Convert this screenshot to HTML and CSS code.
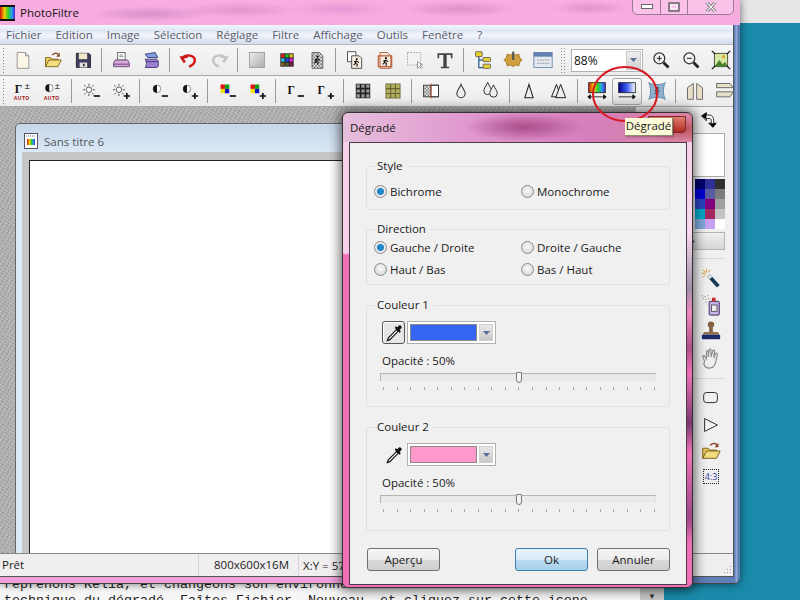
FILE: index.html
```html
<!DOCTYPE html>
<html lang="fr">
<head>
<meta charset="utf-8">
<title>PhotoFiltre - Dégradé</title>
<link rel="stylesheet" href="styles.css">
</head>
<body>
<svg class="defs" width="0" height="0" aria-hidden="true">
  <defs>
    <linearGradient id="rainbow" x1="0" x2="1" y1="0" y2="0"><stop offset="0" stop-color="#d01010"/><stop offset=".3" stop-color="#f0d000"/><stop offset=".55" stop-color="#30d030"/><stop offset=".8" stop-color="#20a0f0"/><stop offset="1" stop-color="#5020d0"/></linearGradient>
    <linearGradient id="bluegrad" x1="0" x2="1" y1="0" y2="0"><stop offset="0" stop-color="#000090"/><stop offset=".5" stop-color="#4060f0"/><stop offset="1" stop-color="#fff"/></linearGradient>
    <linearGradient id="graysq" x1="0" x2="1" y1="0" y2="1"><stop offset="0" stop-color="#eee"/><stop offset="1" stop-color="#aaa"/></linearGradient>
    <pattern id="check" width="4" height="4" patternUnits="userSpaceOnUse"><rect width="4" height="4" fill="#eee"/><rect width="2" height="2" fill="#777"/><rect x="2" y="2" width="2" height="2" fill="#777"/></pattern>
    <symbol id="runner" viewBox="0 0 24 24"><circle cx="13" cy="6" r="2" fill="#111"/><path d="M13 9l-3 5 4 2-1 5M12 10l-4 2M13 10l4 3M10 15l-3 3" fill="none" stroke="#111" stroke-width="2"/></symbol>
    <symbol id="folder" viewBox="0 0 24 24"><path d="M3 20V9h6l2 2h7v2" fill="#e8c860" stroke="#7a5a10"/><path d="M3 20l4-8h15l-4 8z" fill="#f2dc80" stroke="#7a5a10"/><path d="M11 6c3-3 6-3 8 0" fill="none" stroke="#8a4020" stroke-width="1.3"/><path d="M20 3v5h-4z" fill="#8a4020"/></symbol>
    <symbol id="drop" viewBox="0 0 24 24"><path d="M12 4c-2 5-5 8-5 11a5 5 0 0 0 10 0c0-3-3-6-5-11z" fill="#eee" stroke="#333" stroke-width="1.3"/></symbol>
    <symbol id="dropper" viewBox="0 0 24 24"><path d="M15 8L5 18l-1 3 3-1L17 10z" fill="#fff" stroke="#111" stroke-width="1.4"/><path d="M13 6l6 6 1-2-1-2 2-2c1-2-2-4-3-3l-2 2-2-1z" fill="#111"/></symbol>
    <symbol id="sun" viewBox="0 0 16 16"><circle cx="8" cy="8" r="3.5" fill="#fff" stroke="#333"/><path d="M8 0v3M8 13v3M0 8h3M13 8h3M2 2l2 2M12 12l2 2M2 14l2-2M12 4l2-2" stroke="#333"/></symbol>
    <symbol id="half" viewBox="0 0 12 12"><circle cx="6" cy="6" r="5" fill="#fff" stroke="#222" stroke-width=".6"/><path d="M6 1a5 5 0 0 0 0 10z" fill="#111"/></symbol>
    <symbol id="rgb" viewBox="0 0 12 12"><rect width="6" height="6" fill="#e01010"/><rect x="6" width="6" height="6" fill="#10a010"/><rect y="6" width="6" height="6" fill="#f0e010"/><rect x="6" y="6" width="6" height="6" fill="#1010c0"/></symbol>
    <symbol id="minus" viewBox="0 0 8 8"><rect y="3" width="8" height="2" fill="#111"/></symbol>
    <symbol id="plus" viewBox="0 0 8 8"><path d="M3 0h2v3h3v2H5v3H3V5H0V3h3z" fill="#111"/></symbol>
    <symbol id="gridicon" viewBox="0 0 14 14"><rect width="14" height="14" fill="#222"/><path d="M1 1h3v3H1zM5.500 1h3v3h-3zM10 1h3v3h-3zM1 5.500h3v3H1zM5.500 5.500h3v3h-3zM10 5.500h3v3h-3zM1 10h3v3H1zM5.500 10h3v3h-3zM10 10h3v3h-3z" fill="#999"/></symbol>
    <symbol id="lens" viewBox="0 0 24 24"><path d="M15 15l6 6" stroke="#222" stroke-width="3.4"/><circle cx="10" cy="10" r="6.500" fill="#f4f4f4" stroke="#333" stroke-width="1.500"/></symbol>
  </defs>
</svg>

<div class="desktop">
  <div class="corner-gray"></div>
  <div class="page-behind">
    <p class="page-line">reprenons Kelia, et changeons son environnement</p>
    <p class="page-line">technique du dégradé. Faîtes Fichier, Nouveau, et cliquez sur cette icone</p>
    <span class="page-arrow">▼</span>
  </div>

  <section class="app">
    <header class="app-title">
      <svg class="app-icon" width="15" height="16" viewBox="0 0 15 16"><rect width="15" height="16" fill="#111"/><rect x="0" y="2" width="15" height="12" fill="url(#rainbow)"/></svg>
      <span class="app-name">PhotoFiltre</span>
      <div class="win-ctrls">
        <span class="win-btn win-min"><svg width="12" height="6" viewBox="0 0 12 6"><rect x=".5" y=".5" width="11" height="4" fill="#fff" stroke="#666"/></svg></span>
        <span class="win-btn win-max"><svg width="12" height="10" viewBox="0 0 12 10"><rect x="1" y="1" width="10" height="8" fill="none" stroke="#666" stroke-width="1.500"/><rect x="3" y="3" width="6" height="4" fill="#f4c8e8" stroke="#fff"/></svg></span>
        <span class="win-btn win-close"><svg width="12" height="10" viewBox="0 0 12 10"><path d="M1.500 0l9 10M10.500 0l-9 10" stroke="#666" stroke-width="2.800"/><path d="M1.500 0l9 10M10.500 0l-9 10" stroke="#fff" stroke-width="1.200"/></svg></span>
      </div>
    </header>

    <div class="client">
      <nav class="menu">
        <span>Fichier</span><span>Edition</span><span>Image</span><span>Sélection</span><span>Réglage</span><span>Filtre</span><span>Affichage</span><span>Outils</span><span>Fenêtre</span><span>?</span>
      </nav>

      <div class="toolbar">
        <i class="grip"></i>
        <b class="tool"><svg viewBox="0 0 24 24"><path d="M5 3h10l4 4v15H5z" fill="#fbf6e6" stroke="#888"/><path d="M15 3v4h4" fill="#ddd" stroke="#888"/></svg></b>
        <b class="tool"><svg viewBox="0 0 24 24"><use href="#folder"/></svg></b>
        <b class="tool"><svg viewBox="0 0 24 24"><path d="M4 4h15l2 2v15H4z" fill="#3c3c5e" stroke="#222"/><rect x="7" y="4" width="10" height="7" fill="#f0e8c8"/><rect x="8" y="15" width="9" height="6" fill="#ddd"/><rect x="12" y="16.500" width="2" height="3" fill="#333"/></svg></b>
        <i class="sep"></i>
        <b class="tool"><svg viewBox="0 0 24 24"><rect x="8" y="3" width="9" height="9" fill="#fff" stroke="#555"/><path d="M10 6h4M10 8h5" stroke="#777"/><path d="M5 12h15l2 4v4H3v-4z" fill="#d8a8d8" stroke="#5a3a6a"/><path d="M3 17h19" stroke="#5a3a6a"/></svg></b>
        <b class="tool"><svg viewBox="0 0 24 24"><path d="M5 5l12-2 3 6H8z" fill="#80a0e0" stroke="#303070"/><path d="M5 11h14c2 2 2 5 2 6s0 4-3 4H5c2-2 2-7 0-10z" fill="#a080d0" stroke="#303070"/><path d="M6 14h15" stroke="#303070"/></svg></b>
        <i class="sep"></i>
        <b class="tool"><svg viewBox="0 0 24 24"><path d="M7 15l-4-6 7-1M4 9c6-4 14-3 15 3 0 4-4 7-7 8" fill="none" stroke="#d01818" stroke-width="3"/></svg></b>
        <b class="tool"><svg viewBox="0 0 24 24"><path d="M17 15l4-6-7-1M20 9C14 5 6 6 5 12c0 4 4 7 7 8" fill="none" stroke="#c4c4c4" stroke-width="3"/></svg></b>
        <i class="sep"></i>
        <b class="tool"><svg viewBox="0 0 24 24"><rect x="3" y="3" width="18" height="18" fill="url(#graysq)" stroke="#999"/></svg></b>
        <b class="tool"><svg viewBox="0 0 24 24"><rect x="4" y="4" width="16" height="16" fill="#222"/><path d="M5 5h4v4H5z" fill="#e02020"/><path d="M10 5h4v4h-4z" fill="#20c020"/><path d="M15 5h4v4h-4z" fill="#e0c020"/><path d="M5 10h4v4H5z" fill="#20c0e0"/><path d="M10 10h4v4h-4z" fill="#2040e0"/><path d="M15 10h4v4h-4z" fill="#e020e0"/><path d="M5 15h4v4H5z" fill="#806020"/><path d="M10 15h4v4h-4z" fill="#506030"/><path d="M15 15h4v4h-4z" fill="#802040"/></svg></b>
        <b class="tool"><svg viewBox="0 0 24 24"><path d="M6 3h9l4 4v15H6z" fill="url(#check)" stroke="#555"/><use href="#runner" x="2" y="4" width="20" height="16"/></svg></b>
        <i class="sep"></i>
        <b class="tool"><svg viewBox="0 0 24 24"><path d="M3 2h10v12H3z" fill="#fff" stroke="#333"/><path d="M8 7h9l3 3v12H8z" fill="#f8f0e0" stroke="#333"/><use href="#runner" x="6" y="7" width="15" height="15"/></svg></b>
        <b class="tool"><svg viewBox="0 0 24 24"><path d="M6 3h9l4 4v15H6z" fill="#f8e8d8" stroke="#a05030"/><rect x="4" y="7" width="16" height="13" fill="none" stroke="#c06040" stroke-width="1.500"/><use href="#runner" x="5" y="6" width="15" height="15"/></svg></b>
        <b class="tool"><svg viewBox="0 0 24 24"><rect x="3" y="3" width="16" height="15" fill="#f2f2f2" stroke="#999" stroke-dasharray="2 1.500"/><path d="M15 14v8l2-2 3 2 1-1-3-3h3z" fill="#fff" stroke="#888"/></svg></b>
        <b class="tool"><svg viewBox="0 0 24 24"><path d="M3 4h18v6h-2V6h-5v14h3v2H7v-2h3V6H5v4H3z" fill="#444"/></svg></b>
        <i class="sep"></i>
        <b class="tool"><svg viewBox="0 0 24 24"><path d="M7 6v15h5M7 12h5" fill="none" stroke="#2a5a90" stroke-width="1.500"/><rect x="3" y="2" width="8" height="6" rx="1" fill="#e8d030" stroke="#555"/><rect x="12" y="9" width="9" height="5" rx="1" fill="#e8d030" stroke="#555"/><rect x="12" y="17" width="9" height="5" rx="1" fill="#e8d030" stroke="#555"/></svg></b>
        <b class="tool"><svg viewBox="0 0 24 24"><path d="M12 4l3 2 4-1 1 4 3 3-3 3-1 4-4-1-3 2-3-2-4 1-1-4-3-3 3-3 1-4 4 1z" fill="#d0a040" stroke="#a07020"/><rect x="11" y="2" width="2.500" height="10" fill="#555"/></svg></b>
        <b class="tool"><svg viewBox="0 0 24 24"><rect x="1" y="3" width="22" height="18" fill="#e4e8f0" stroke="#6080b0"/><rect x="1" y="3" width="22" height="5" fill="#6080b0"/><path d="M5 12h14M5 16h14" stroke="#888" stroke-dasharray="2 1"/></svg></b>
        <i class="grip grip-end"></i>
        <div class="zoom-combo"><span class="zoom-val">88%</span><span class="zoom-arrow"><svg width="7" height="4" viewBox="0 0 7 4"><path d="M0 0h7L3.500 4z" fill="#5a6a9a"/></svg></span></div>
        <b class="tool"><svg viewBox="0 0 24 24"><use href="#lens"/><path d="M7 10h6M10 7v6" stroke="#222" stroke-width="1.200"/></svg></b>
        <b class="tool"><svg viewBox="0 0 24 24"><use href="#lens"/><path d="M7 10h6" stroke="#222" stroke-width="1.200"/></svg></b>
        <b class="tool"><svg viewBox="0 0 24 24"><rect x="4" y="4" width="16" height="16" fill="#d8e8a0" stroke="#333"/><path d="M4 20l6-8 4 5 3-3 3 6z" fill="#4a8030"/><circle cx="15" cy="8" r="2" fill="#e0a030"/><path d="M1 1l4 4M23 1l-4 4M1 23l4-4M23 23l-4-4" stroke="#111" stroke-width="1.500"/></svg></b>
      </div>

      <div class="toolbar toolbar-2">
        <i class="grip"></i>
        <b class="tool"><svg viewBox="0 0 24 24"><text x="2" y="14" class="gamma">Γ</text><text x="14" y="10" class="pm">±</text><text x="1" y="23" class="auto">AUTO</text></svg></b>
        <b class="tool"><svg viewBox="0 0 24 24"><use href="#half" x="2" y="3" width="11" height="11"/><text x="14" y="10" class="pm">±</text><text x="1" y="23" class="auto">AUTO</text></svg></b>
        <i class="sep"></i>
        <b class="tool"><svg viewBox="0 0 24 24"><use href="#sun" x="2" y="3" width="15" height="15"/><use href="#minus" x="15" y="14" width="8" height="8"/></svg></b>
        <b class="tool"><svg viewBox="0 0 24 24"><use href="#sun" x="2" y="3" width="15" height="15"/><use href="#plus" x="15" y="14" width="8" height="8"/></svg></b>
        <i class="sep"></i>
        <b class="tool"><svg viewBox="0 0 24 24"><use href="#half" x="4" y="4" width="11" height="11"/><use href="#minus" x="15" y="14" width="8" height="8"/></svg></b>
        <b class="tool"><svg viewBox="0 0 24 24"><use href="#half" x="4" y="4" width="11" height="11"/><use href="#plus" x="15" y="14" width="8" height="8"/></svg></b>
        <i class="sep"></i>
        <b class="tool"><svg viewBox="0 0 24 24"><use href="#rgb" x="4" y="4" width="11" height="11"/><use href="#minus" x="15" y="14" width="8" height="8"/></svg></b>
        <b class="tool"><svg viewBox="0 0 24 24"><use href="#rgb" x="4" y="4" width="11" height="11"/><use href="#plus" x="15" y="14" width="8" height="8"/></svg></b>
        <i class="sep"></i>
        <b class="tool"><svg viewBox="0 0 24 24"><text x="3" y="16" class="gamma">Γ</text><use href="#minus" x="15" y="14" width="8" height="8"/></svg></b>
        <b class="tool"><svg viewBox="0 0 24 24"><text x="3" y="16" class="gamma">Γ</text><use href="#plus" x="15" y="14" width="8" height="8"/></svg></b>
        <i class="sep"></i>
        <b class="tool"><svg viewBox="0 0 24 24"><use href="#gridicon" x="3" y="3" width="18" height="18"/></svg></b>
        <b class="tool"><svg viewBox="0 0 24 24"><rect x="3" y="3" width="18" height="18" fill="#665f30"/><path d="M4 4h4.500v4.500H4zM9.800 4h4.500v4.500H9.800zM15.500 4H20v4.500h-4.500zM4 9.800h4.500v4.500H4zM9.800 9.800h4.500v4.500H9.800zM15.500 9.800H20v4.500h-4.500zM4 15.500h4.500V20H4zM9.800 15.500h4.500V20H9.800zM15.500 15.500H20V20h-4.500z" fill="#b0b060"/></svg></b>
        <i class="sep"></i>
        <b class="tool"><svg viewBox="0 0 24 24"><rect x="3" y="5" width="9" height="14" fill="url(#check)"/><rect x="12" y="5" width="9" height="14" fill="#fff" stroke="#333"/><rect x="3" y="5" width="18" height="14" fill="none" stroke="#333"/><path d="M12 3v18" stroke="#c04020"/></svg></b>
        <b class="tool"><svg viewBox="0 0 24 24"><use href="#drop"/></svg></b>
        <b class="tool"><svg viewBox="0 0 24 24"><use href="#drop" x="-3" y="-2" width="22" height="22"/><use href="#drop" x="4" y="1" width="22" height="22"/></svg></b>
        <i class="sep"></i>
        <b class="tool"><svg viewBox="0 0 24 24"><path d="M12 4l5 16H7z" fill="#eee" stroke="#222" stroke-width="1.300"/></svg></b>
        <b class="tool"><svg viewBox="0 0 24 24"><path d="M9 4l5 15H3z" fill="#eee" stroke="#222" stroke-width="1.200"/><path d="M14 4l6 16H8z" fill="#eee" stroke="#222" stroke-width="1.200"/></svg></b>
        <i class="sep"></i>
        <b class="tool"><svg viewBox="0 0 24 24"><rect x="2" y="2" width="20" height="12" fill="url(#rainbow)" stroke="#222"/><path d="M1 19h22M1 19l3-2.500v5zM23 19l-3-2.500v5z" stroke="#111" fill="#111"/></svg></b>
        <b class="tool tool-on"><svg viewBox="0 0 24 24"><rect x="2" y="2" width="20" height="12" fill="url(#bluegrad)" stroke="#222"/><path d="M2 19h19M22 19l-3-2.500v5z" stroke="#111" fill="#111"/></svg></b>
        <b class="tool"><svg viewBox="0 0 24 24"><path d="M2 2c5 3 15 3 20 0-3 5-3 15 0 20-5-3-15-3-20 0 3-5 3-15 0-20z" fill="#8fb0cc" stroke="#5080a0"/><use href="#runner" x="5" y="5" width="14" height="14"/></svg></b>
        <i class="sep"></i>
        <b class="tool"><svg viewBox="0 0 24 24"><path d="M3 8l7-5v19H3zM21 8l-7-5v19h7z" fill="#e8dfc8" stroke="#555"/></svg></b>
        <b class="tool"><svg viewBox="0 0 24 24"><path d="M6 3h12l4 5H2V3zM2 13h20l-4 6H2z" fill="#e8dfc8" stroke="#555"/></svg></b>
      </div>

      <div class="main">
        <div class="workspace">
          <article class="doc">
            <header class="doc-title">
              <svg width="14" height="16" viewBox="0 0 14 16"><rect x=".5" y=".5" width="13" height="15" fill="#fff" stroke="#556"/><path d="M2 3h10" stroke="#778" stroke-dasharray="1 1"/><rect x="3" y="6" width="8" height="6" fill="url(#rainbow)"/></svg>
              <span>Sans titre 6</span>
            </header>
            <div class="doc-body"><div class="canvas"></div></div>
          </article>
        </div>

        <aside class="tools-side">
          <svg class="swap" width="18" height="18" viewBox="0 0 22 22"><path d="M3 6l6-4v3h4c3 0 5 3 5 7v3h3l-4 5-5-5h3v-3c0-2-1-3-2-3H9v3z" fill="#fff" stroke="#000"/><path d="M3 6l6-4v8zM12 15h9l-4 5z" fill="#000"/></svg>
          <div class="color-box"></div>
          <svg class="palette" width="30" height="50" viewBox="0 0 30 50">
            <rect width="10" height="10" fill="#00006a"/><rect x="10" width="10" height="10" fill="#2f2f98"/><rect x="20" width="10" height="10" fill="#303030"/>
            <rect y="10" width="10" height="10" fill="#0000d0"/><rect x="10" y="10" width="10" height="10" fill="#5a5aa0"/><rect x="20" y="10" width="10" height="10" fill="#7c7c7c"/>
            <rect y="20" width="10" height="10" fill="#2a45c0"/><rect x="10" y="20" width="10" height="10" fill="#800080"/><rect x="20" y="20" width="10" height="10" fill="#a0a0a0"/>
            <rect y="30" width="10" height="10" fill="#00a8c8"/><rect x="10" y="30" width="10" height="10" fill="#a02a60"/><rect x="20" y="30" width="10" height="10" fill="#c4c4c4"/>
            <rect y="40" width="10" height="10" fill="#7fa8d8"/><rect x="10" y="40" width="10" height="10" fill="#c8a0f0"/><rect x="20" y="40" width="10" height="10" fill="#fff"/>
          </svg>
          <div class="pal-next"><svg width="4" height="7" viewBox="0 0 4 7"><path d="M0 0l4 3.500L0 7z" fill="#5a6a9a"/></svg></div>
          <hr class="side-rule">
          <b class="side-tool"><svg viewBox="0 0 24 24"><path d="M9 9l11 12" stroke="#1a3a5a" stroke-width="4"/><path d="M9 9l3 3" stroke="#ddd" stroke-width="4"/><path d="M7 2v4M2 7h4M3 3l3 3M11 3l-2 3M3 11l3-2" stroke="#c89020"/></svg></b>
          <b class="side-tool"><svg viewBox="0 0 24 24"><rect x="10" y="8" width="11" height="15" rx="1" fill="#c8b0e8" stroke="#302050"/><rect x="12.500" y="12" width="6" height="7" fill="#eee" stroke="#555"/><rect x="13" y="4" width="4" height="4" fill="#c03030"/><path d="M2 2h1M5 3h1M8 2h1M3 5h1M6 6h1M9 5h1M6 9h1" stroke="#555"/></svg></b>
          <b class="side-tool"><svg viewBox="0 0 24 24"><circle cx="12" cy="5" r="3.500" fill="#806040"/><rect x="10" y="8" width="4" height="6" fill="#806040"/><path d="M5 13h14c1 0 2 2 2 3H3c0-1 1-3 2-3z" fill="#907050"/><rect x="2" y="16" width="20" height="5" rx="1" fill="#1a2a6a"/></svg></b>
          <b class="side-tool"><svg viewBox="0 0 24 24"><path d="M5 16l-2-6c0-1 2-1 2 0l2 3V5c0-1 2-1 2 0v6l1-8c0-1 2-1 2 0v8l2-7c0-1 2-1 2 0l-1 8 2-5c1-1 2 0 2 1l-2 9c-1 4-3 6-7 6-3 0-5-1-6-5z" fill="#eee" stroke="#888" stroke-width="1.200"/></svg></b>
          <hr class="side-rule side-rule-2">
          <b class="side-tool"><svg viewBox="0 0 24 24"><rect x="4" y="6" width="15" height="11" rx="3" fill="none" stroke="#222"/></svg></b>
          <b class="side-tool"><svg viewBox="0 0 24 24"><path d="M5 5l14 7-14 7z" fill="none" stroke="#222"/></svg></b>
          <b class="side-tool"><svg viewBox="0 0 24 24"><use href="#folder"/></svg></b>
          <b class="side-tool side-ratio">4:3</b>
        </aside>
      </div>

      <footer class="status">
        <span class="st-main">Prêt</span>
        <span class="st-size">800x600x16M</span>
        <span class="st-xy">X:Y = 57</span>
        <svg class="size-grip" width="10" height="10" viewBox="0 0 10 10"><path d="M8 1h1v1H8zM8 4h1v1H8zM5 4h1v1H5zM8 7h1v1H8zM5 7h1v1H5zM2 7h1v1H2z" fill="#999"/></svg>
      </footer>
    </div>
  </section>

  <section class="dialog">
    <header class="dlg-title">Dégradé</header>
    <span class="dlg-close"></span>
    <form class="dlg-body">
      <fieldset class="group group-style">
        <legend>Style</legend>
        <div class="radio-grid">
          <label class="radio"><input type="radio" name="style" checked>Bichrome</label>
          <label class="radio"><input type="radio" name="style">Monochrome</label>
        </div>
      </fieldset>
      <fieldset class="group group-dir">
        <legend>Direction</legend>
        <div class="radio-grid">
          <label class="radio"><input type="radio" name="dir" checked>Gauche / Droite</label>
          <label class="radio"><input type="radio" name="dir">Droite / Gauche</label>
          <label class="radio"><input type="radio" name="dir">Haut / Bas</label>
          <label class="radio"><input type="radio" name="dir">Bas / Haut</label>
        </div>
      </fieldset>
      <fieldset class="group group-color">
        <legend>Couleur 1</legend>
        <div class="color-row">
          <span class="pick pick-on"><svg width="20" height="20" viewBox="0 0 24 24"><use href="#dropper"/></svg></span>
          <span class="color-combo"><span class="swatch swatch-blue"></span><span class="combo-arrow"><svg width="7" height="4" viewBox="0 0 7 4"><path d="M0 0h7L3.500 4z" fill="#5a6a9a"/></svg></span></span>
        </div>
        <div class="opacity">Opacité : 50%</div>
        <div class="slider"><span class="thumb"></span></div>
        <div class="ticks"><i></i><i></i><i></i><i></i><i></i><i></i><i></i><i></i><i></i><i></i><i></i><i></i><i></i><i></i><i></i><i></i><i></i><i></i><i></i><i></i><i></i></div>
      </fieldset>
      <fieldset class="group group-color">
        <legend>Couleur 2</legend>
        <div class="color-row">
          <span class="pick"><svg width="20" height="20" viewBox="0 0 24 24"><use href="#dropper"/></svg></span>
          <span class="color-combo"><span class="swatch swatch-pink"></span><span class="combo-arrow"><svg width="7" height="4" viewBox="0 0 7 4"><path d="M0 0h7L3.500 4z" fill="#5a6a9a"/></svg></span></span>
        </div>
        <div class="opacity">Opacité : 50%</div>
        <div class="slider"><span class="thumb"></span></div>
        <div class="ticks"><i></i><i></i><i></i><i></i><i></i><i></i><i></i><i></i><i></i><i></i><i></i><i></i><i></i><i></i><i></i><i></i><i></i><i></i><i></i><i></i><i></i></div>
      </fieldset>
      <div class="dlg-actions">
        <button type="button" class="btn">Aperçu</button>
        <button type="button" class="btn btn-default">Ok</button>
        <button type="button" class="btn">Annuler</button>
      </div>
    </form>
  </section>

  <svg class="red-circle" width="70" height="60" viewBox="0 0 70 60"><ellipse cx="35" cy="30" rx="32" ry="27" fill="none" stroke="#d81a22" stroke-width="2"/></svg>
  <div class="tooltip">Dégradé</div>
</div>
</body>
</html>
```
FILE: styles.css
```css
* { box-sizing: border-box; }
html, body { margin: 0; padding: 0; }
body { font-family: "Open Sans", "Noto Sans", sans-serif; font-size: 11.5px; color: #1c1c1c; }
.defs { position: absolute; }

.desktop { position: relative; width: 800px; height: 600px; overflow: hidden; background: #1a8aaa; }
.corner-gray { position: absolute; left: 740px; top: 0; width: 60px; height: 23px; background: #e6e6e6; }

.page-behind { position: absolute; left: 0; top: 570px; width: 664px; height: 30px; background: #f6f6f6; overflow: hidden; }
.page-line { margin: 0; padding-left: 4px; font: 13.33px/16px "Liberation Mono", monospace; color: #222; white-space: nowrap; position: relative; top: 7px; }
.page-arrow { position: absolute; right: 0; top: 0; width: 24px; height: 30px; background: #c8c8c8; font-size: 8px; line-height: 52px; text-align: center; color: #333; }

/* main window */
.app {
  position: absolute; left: 0; top: 0; width: 740px; height: 584px;
  display: flex; flex-direction: column;
  border-radius: 0 0 6px 0;
  background: linear-gradient(90deg, #f2a0dc 0, #f2a0dc 600px, #5f7fb8 680px, #5f7fb8 735px, #90a8d4 736px, #90a8d4 737px, #5f7fb8 738px);
  box-shadow: 0 0 8px rgba(0,0,0,.55), inset 0 -1px 0 #444;
}
.app-title {
  height: 25px; flex: none; display: flex; align-items: center; position: relative;
  background:
    radial-gradient(ellipse 60px 8px at 150px 14px, rgba(190,120,190,.55), transparent),
    radial-gradient(ellipse 60px 8px at 240px 10px, rgba(200,120,180,.45), transparent),
    radial-gradient(ellipse 50px 8px at 340px 9px, rgba(210,120,200,.4), transparent),
    radial-gradient(ellipse 60px 8px at 460px 9px, rgba(190,110,170,.45), transparent),
    radial-gradient(ellipse 40px 7px at 590px 8px, rgba(190,110,170,.4), transparent),
    #f7addf;
}
.app-icon { margin: 1px 5px 0 0; }
.app-name { color: #151515; }
.win-ctrls { position: absolute; left: 632px; top: -1px; width: 102px; height: 16px; display: flex; border: 1px solid #9a7a98; border-radius: 0 0 5px 5px; background: rgba(255,225,245,.4); }
.win-btn { display: flex; align-items: center; justify-content: center; border-right: 1px solid #9a7a98; }
.win-btn svg { margin-bottom: 1px; }
.win-min { width: 28px; }
.win-max { width: 27px; }
.win-close { flex: 1; border-right: 0; }

.client { flex: 1; min-height: 0; margin: 0 7px 8px 0; display: flex; flex-direction: column; background: #efefef; box-shadow: 0 0 0 1px #555; }

.menu { height: 20px; flex: none; display: flex; align-items: center; padding-left: 6px; gap: 14px; color: #5c5c68; background: linear-gradient(#f4f6fb 0, #dde6f6 30%, #f2f5fb 52%, #d2dcee 100%); border-bottom: 1px solid #b8b8b8; }
.menu span { white-space: nowrap; }

.toolbar { height: 31px; flex: none; display: flex; align-items: center; background: linear-gradient(#f6f6f6, #ececec); border-bottom: 1px solid #a8a8a8; }
.grip { width: 8px; height: 26px; flex: none; background: radial-gradient(circle, #888 0.7px, transparent 1px) 2px 0 / 3px 3px; background-clip: content-box; padding: 0 2px; }
.grip-end { margin: 0 3px 0 0; width: 10px; padding: 0 3px; }
.sep { width: 8px; height: 24px; flex: none; background: linear-gradient(#999, #999) 3px 0 / 1px 100% no-repeat; }
.tool { width: 30px; height: 27px; flex: none; display: flex; align-items: center; justify-content: center; }
.tool svg { width: 20px; height: 20px; overflow: visible; }
.tool-on { border: 1px solid #a8a8a8; border-radius: 3px; background: linear-gradient(#fafafa 0, #efefef 50%, #dcdcdc 100%); }
.gamma { font: bold 14px "Liberation Serif", serif; fill: #111; }
.pm { font: 11px "Liberation Sans", sans-serif; fill: #333; }
.auto { font: bold 6px "Liberation Sans", sans-serif; fill: #a01010; letter-spacing: .5px; }

.zoom-combo { width: 72px; height: 23px; flex: none; display: flex; border: 1px solid #b4b4b4; background: #fff; margin-right: 3px; }
.zoom-val { flex: 1; padding: 2px 2px; font-size: 12px; color: #111; }
.zoom-arrow { width: 15px; margin: 1px; display: flex; align-items: center; justify-content: center; background: linear-gradient(#f0f0f0, #cfcfcf); border: 1px solid #c8c8c8; }

.main { flex: 1; min-height: 0; display: flex; }
.workspace {
  flex: none; width: 636px; padding: 16px 0 0 15px; overflow: hidden;
  background:
    repeating-linear-gradient(35deg, rgba(255,255,255,.18) 0 1px, transparent 1px 3px),
    repeating-linear-gradient(-60deg, rgba(0,0,0,.1) 0 1px, transparent 1px 4px),
    #aeaeae;
}
.doc { width: 700px; height: 460px; border: 1px solid #666; border-radius: 5px 5px 0 0; background: linear-gradient(#c6d7ea, #dce9f6 30px); padding: 0 0 0 6px; }
.doc-title { height: 28px; padding: 6px 0 0 2px; display: flex; align-items: center; gap: 6px; color: #55585c; }
.doc-body { background: #c6c6c6; padding: 8px 0 0 7px; height: 420px; }
.canvas { height: 400px; background: #fff; border: 1px solid #222; }

.tools-side { flex: none; width: 97px; padding: 0 8px 0 0; display: flex; flex-direction: column; align-items: flex-end; background: #f0f0f0; }
.swap { margin: 4px 8px 4px 0; }
.color-box { width: 60px; height: 44px; background: #fff; border: 1px solid #aaa; border-left: 0; margin-bottom: 3px; }
.palette { display: block; margin: -1px 0 3px 0; }
.pal-next { width: 45px; height: 18px; padding-left: 10px; display: flex; align-items: center; border: 1px solid #b4b4b4; background: linear-gradient(#f0f0f0, #d4d4d4); }
.side-rule { width: 45px; height: 1px; margin: 8px 0 6px; border: 0; background: #d8d8d8; }
.side-rule-2 { margin: 7px 0 6px; }
.side-tool { width: 30px; height: 26.500px; margin-right: -1px; display: flex; align-items: center; justify-content: center; }
.side-tool svg { width: 22px; height: 22px; }
.side-ratio { width: 16px; height: 15px; margin: 4px 6px 0 0; border: 1px dotted #222; color: #3040a0; font-size: 9px; font-weight: 400; line-height: 13px; text-align: center; }

.status { height: 23px; flex: none; display: flex; align-items: center; position: relative; background: #f0eeee; border-top: 1px solid #888; }
.st-main { width: 199px; padding-left: 2px; border-right: 1px solid #d4d4d4; line-height: 22px; }
.st-size { width: 100px; padding-left: 15px; border-right: 1px solid #d4d4d4; line-height: 22px; }
.st-xy { padding-left: 4px; }
.size-grip { position: absolute; right: 1px; bottom: 1px; }

/* dialog */
.dialog {
  position: absolute; left: 342px; top: 112px; width: 351px; height: 476px;
  padding: 29px 5px 2px 6px; border: 1px solid #333; border-radius: 6px;
  background:
    radial-gradient(ellipse 60px 14px at 52% 14px, rgba(165,70,130,.9), transparent) 0 0 / 100% 29px no-repeat,
    radial-gradient(ellipse 40px 12px at 97% 16px, rgba(180,60,60,.7), transparent) 0 0 / 100% 29px no-repeat,
    linear-gradient(90deg, #e6bedc 0, #e099cf 35%, #d67fbd 70%, #d8829f 100%) 0 0 / 100% 29px no-repeat,
    linear-gradient(#f6cfe8 0, #f8d8ec 120px, #a090a8 175px, #f088c0 200px, #b05088 235px, #f070b8 260px, #7a3a70 310px, #f070b8 340px, #a04888 405px, #f070b8 430px, #f070b8 100%) 100% 0 / 5px 100% no-repeat,
    linear-gradient(#f8d0ea 0, #f8d0ea 140px, #ef70b8 142px, #ef70b8 100%);
  box-shadow: 0 0 12px 2px rgba(0,0,0,.6);
}
.dlg-title { position: absolute; left: 7px; top: 7px; color: #1a1a1a; }
.dlg-close { position: absolute; right: 6px; top: 3px; width: 38px; height: 17px; border: 1px solid #7a2a2a; border-radius: 0 0 4px 4px; background: linear-gradient(#e08070, #b02a20); }

.dlg-body { height: 100%; padding: 15px 16px 0; background: #f0f0f0; border: 1px solid #4a3a4a; display: flex; flex-direction: column; }
.group { margin: 0 0 12px; padding: 9px 7px 10px; width: 304px; min-width: 0; border: 1px solid #dde1e6; border-radius: 3px; }
.group legend { margin-left: 0; padding: 0 5px 0 3px; height: 16px; line-height: 16px; color: #1a1a1a; }
.group-style { margin-bottom: 11px; }
.group-dir { padding: 2px 7px 7px; }
.group-color { padding: 8px 0 0 13px; height: 110px; }
.group-color legend { margin-left: -6px; }
.group-color + .group-color { height: 112px; }

.radio-grid { display: grid; grid-template-columns: 147px 147px; row-gap: 6px; }
.radio { display: flex; align-items: center; height: 16px; gap: 3px; color: #1a1a1a; white-space: nowrap; }
.radio input { appearance: none; width: 13px; height: 13px; margin: 0; border: 1px solid #8a8a8a; border-radius: 50%; background: radial-gradient(circle at 50% 40%, #fafafa, #cfcfcf); }
.radio input:checked { background: radial-gradient(circle, #1f86c8 0 3px, #e8e8e8 4px); }

.color-row { display: flex; align-items: center; gap: 2px; height: 23px; margin-left: 2px; }
.pick { width: 23px; height: 23px; display: flex; align-items: center; justify-content: center; border: 1px solid transparent; border-radius: 3px; }
.pick-on { border-color: #555; background: #e6e6e6; box-shadow: inset 1px 1px 0 #fff; }
.color-combo { width: 89px; height: 23px; display: flex; align-items: center; padding: 2px; border: 1px solid #b0b0b0; background: #fff; }
.swatch { width: 67px; height: 17px; border: 1px solid #888; }
.swatch-blue { background: #3565f2; }
.swatch-pink { background: #ff99cc; }
.combo-arrow { flex: 1; height: 17px; margin-left: 2px; display: flex; align-items: center; justify-content: center; background: linear-gradient(#e8e8e8, #c8c8c8); border: 1px solid #d0d0d0; }

.opacity { margin: 8px 0 0 2px; height: 18px; line-height: 18px; color: #1a1a1a; }
.slider { position: relative; width: 276px; height: 8px; margin-top: 3px; background: #e8eaea; border: 1px solid #b4b4b4; border-width: 1px 0 0 1px; border-right: 1px solid #e4e4e4; }
.thumb { position: absolute; left: 135px; top: -2px; width: 6px; height: 11px; background: #f4f4f4; border: 1px solid #777; border-radius: 1px 1px 3px 3px; }
.ticks { width: 272px; height: 4px; margin: 6px 0 0 3px; display: flex; justify-content: space-between; }
.ticks i { width: 1px; height: 3px; background: #a8a8a8; }

.dlg-actions { display: flex; margin-top: 5px; padding: 0 0 0 1px; }
.btn { width: 73px; height: 23px; padding: 0; font: 11.5px "Open Sans", "Noto Sans", sans-serif; color: #1a1a1a; border: 1px solid #707070; border-radius: 3px; background: linear-gradient(#f6f6f6 0, #ececec 50%, #d8d8d8 51%, #cfcfcf 100%); }
.btn + .btn { margin-left: 9px; }
.btn + .btn-default { margin-left: 75px; border-color: #3c7fb1; background: linear-gradient(#e8f4fb 0, #d8ecf8 50%, #bcdcf0 51%, #a8d0ea 100%); }

/* overlays */
.red-circle { position: absolute; left: 590px; top: 64px; }
.tooltip { position: absolute; left: 625px; top: 118px; width: 48px; height: 18px; line-height: 16px; text-align: center; color: #1a1a1a; background: #fdfbd8; border: 1px solid #8a8a70; border-width: 0 1px 1px 0; box-shadow: 1px 1px 2px rgba(0,0,0,.3); white-space: nowrap; }
```
